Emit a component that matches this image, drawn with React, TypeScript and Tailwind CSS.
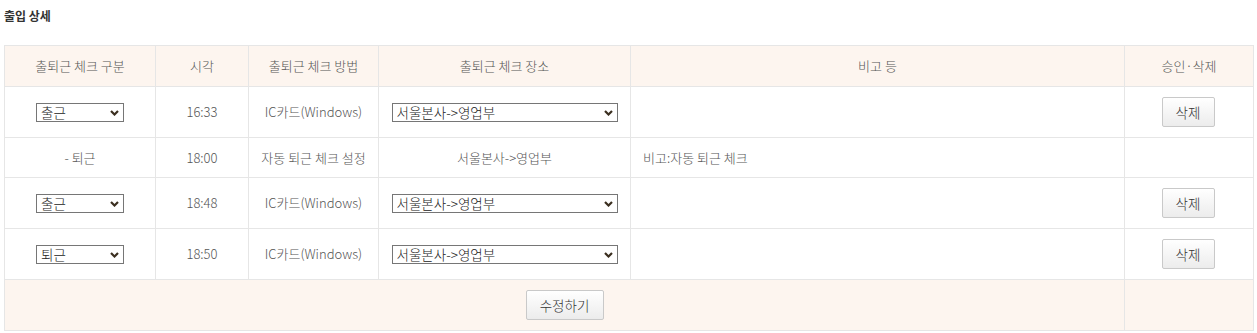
const font = { fontFamily: '"Noto Sans CJK KR", "Noto Sans", sans-serif' }

type Row = {
  type: string
  editable: boolean
  time: string
  method: string
  place: string
  note: string
}

const rows: Row[] = [
  { type: '출근', editable: true, time: '16:33', method: 'IC카드(Windows)', place: '서울본사->영업부', note: '' },
  { type: '- 퇴근', editable: false, time: '18:00', method: '자동 퇴근 체크 설정', place: '서울본사->영업부', note: '비고:자동 퇴근 체크' },
  { type: '출근', editable: true, time: '18:48', method: 'IC카드(Windows)', place: '서울본사->영업부', note: '' },
  { type: '퇴근', editable: true, time: '18:50', method: 'IC카드(Windows)', place: '서울본사->영업부', note: '' },
]

function Select({ value, options, width }: { value: string; options: string[]; width: string }) {
  return (
    <div className={`relative inline-block align-middle ${width}`}>
      <select
        defaultValue={value}
        className="block h-[19px] w-full appearance-none border border-[#767676] bg-white pl-[4px] pr-5 text-[13.5px] font-light leading-[17px] text-[#222] outline-none"
      >
        {options.map((o) => (
          <option key={o}>{o}</option>
        ))}
      </select>
      <svg
        className="pointer-events-none absolute right-[5px] top-[7px]"
        width="9"
        height="6"
        viewBox="0 0 9 6"
      >
        <path d="M1 1 L4.5 4.5 L8 1" fill="none" stroke="#3b2f20" strokeWidth="2.2" />
      </svg>
    </div>
  )
}

function Btn({ children, width }: { children: React.ReactNode; width: string }) {
  return (
    <button
      className={`h-[30px] ${width} rounded-[2px] border border-[#c9c9c9] bg-gradient-to-b from-white to-[#ececec] text-[13.5px] font-light text-[#333]`}
    >
      {children}
    </button>
  )
}

export default function App() {
  const th = 'border border-[#e6e6e6] bg-[#fdf5ef] h-[41px] text-[13px] font-light text-[#555]'
  const td = 'border border-[#e6e6e6] text-center text-[13px] font-light text-[#555]'

  return (
    <div className="min-h-[333px] w-[1257px] bg-white" style={font}>
      <div className="px-[4px] pt-[7px] text-[12px] font-bold leading-[18px] text-[#333]">출입 상세</div>
      <table className="ml-[4px] mt-[20px] w-[1249px] table-fixed border-collapse">
        <colgroup>
          <col className="w-[151px]" />
          <col className="w-[93px]" />
          <col className="w-[130px]" />
          <col className="w-[252px]" />
          <col className="w-[494px]" />
          <col className="w-[129px]" />
        </colgroup>
        <thead>
          <tr>
            <th className={th}>출퇴근 체크 구분</th>
            <th className={th}>시각</th>
            <th className={th}>출퇴근 체크 방법</th>
            <th className={th}>출퇴근 체크 장소</th>
            <th className={th}>비고 등</th>
            <th className={th}>승인·삭제</th>
          </tr>
        </thead>
        <tbody>
          {rows.map((r, i) => (
            <tr key={i} className={r.editable ? 'h-[51px]' : 'h-[40px]'}>
              <td className={td}>
                {r.editable ? (
                  <Select value={r.type} options={['출근', '퇴근']} width="w-[88px]" />
                ) : (
                  r.type
                )}
              </td>
              <td className={td}>{r.time}</td>
              <td className={td}>{r.method}</td>
              <td className={td}>
                {r.editable ? (
                  <Select value={r.place} options={[r.place]} width="w-[226px]" />
                ) : (
                  r.place
                )}
              </td>
              <td className={`${td} pl-[12px] text-left`}>{r.note}</td>
              <td className={`${td} pr-[2px]`}>{r.editable && <Btn width="w-[53px]">삭제</Btn>}</td>
            </tr>
          ))}
          <tr className="h-[51px]">
            <td colSpan={5} className={`${td} bg-[#fdf5ef]`}>
              <Btn width="w-[78px]">수정하기</Btn>
            </td>
            <td className={`${td} bg-[#fdf5ef]`}></td>
          </tr>
        </tbody>
      </table>
    </div>
  )
}
